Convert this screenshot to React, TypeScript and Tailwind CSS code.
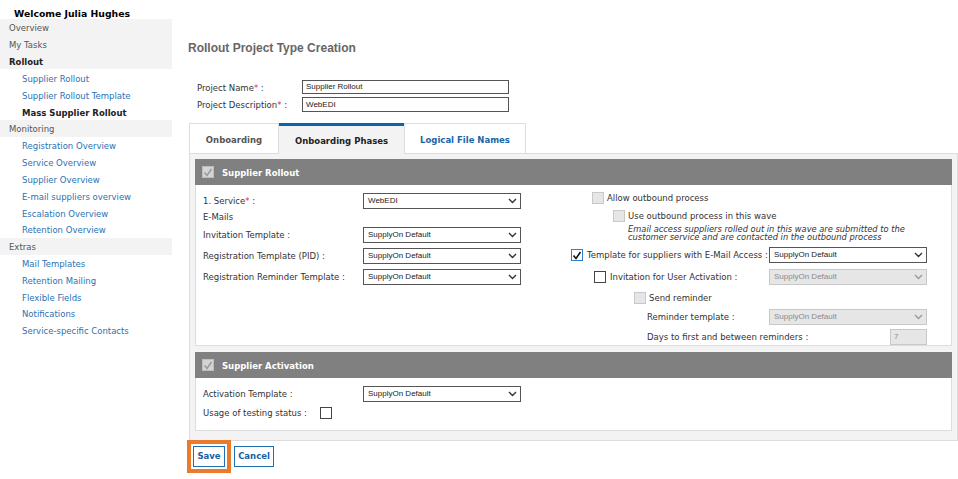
import React from "react";

const NAV: { label: string; kind: "cat" | "link" | "active" | "catActive" }[] = [
  { label: "Overview", kind: "cat" },
  { label: "My Tasks", kind: "cat" },
  { label: "Rollout", kind: "catActive" },
  { label: "Supplier Rollout", kind: "link" },
  { label: "Supplier Rollout Template", kind: "link" },
  { label: "Mass Supplier Rollout", kind: "active" },
  { label: "Monitoring", kind: "cat" },
  { label: "Registration Overview", kind: "link" },
  { label: "Service Overview", kind: "link" },
  { label: "Supplier Overview", kind: "link" },
  { label: "E-mail suppliers overview", kind: "link" },
  { label: "Escalation Overview", kind: "link" },
  { label: "Retention Overview", kind: "link" },
  { label: "Extras", kind: "cat" },
  { label: "Mail Templates", kind: "link" },
  { label: "Retention Mailing", kind: "link" },
  { label: "Flexible Fields", kind: "link" },
  { label: "Notifications", kind: "link" },
  { label: "Service-specific Contacts", kind: "link" },
];

const VERDANA = "font-['DejaVu_Sans',Verdana,sans-serif]";
const ARIAL = "font-['Liberation_Sans',Arial,sans-serif]";

function Chevron({ disabled }: { disabled?: boolean }) {
  return (
    <svg width="9" height="6" viewBox="0 0 9 6" className="shrink-0">
      <polyline
        points="1,1 4.5,4.5 8,1"
        fill="none"
        stroke={disabled ? "#9a9a9a" : "#333"}
        strokeWidth="1.4"
      />
    </svg>
  );
}

function Select({ value, disabled }: { value: string; disabled?: boolean }) {
  return (
    <div
      className={`flex h-[16px] w-[158px] shrink-0 items-center justify-between pl-[4px] pr-[3px] text-[8px] ${ARIAL} ${
        disabled
          ? "border border-[#c8c8c8] bg-[#e6e6e6] text-[#8a8a8a]"
          : "border border-[#555] bg-white text-[#222]"
      }`}
    >
      <span>{value}</span>
      <Chevron disabled={disabled} />
    </div>
  );
}

function Check({ state }: { state: "off" | "disabled" | "on" }) {
  if (state === "on") {
    return (
      <div className="flex h-[12px] w-[12px] shrink-0 items-center justify-center border border-[#2f7fd0] bg-white">
        <svg width="10" height="9" viewBox="0 0 10 9">
          <polyline points="1.5,4.5 4,7.5 8.5,1" fill="none" stroke="#111" strokeWidth="1.6" />
        </svg>
      </div>
    );
  }
  if (state === "disabled") {
    return <div className="h-[12px] w-[12px] shrink-0 border border-[#c8c8c8] bg-[#e6e6e6]" />;
  }
  return <div className="h-[12px] w-[12px] shrink-0 border border-[#444] bg-white" />;
}

function HeaderCheck() {
  return (
    <div className="flex h-[12px] w-[12px] items-center justify-center border border-[#bdbdbd] bg-[#d4d4d4]">
      <svg width="10" height="9" viewBox="0 0 10 9">
        <polyline points="1.5,4.5 4,7.5 8.5,1" fill="none" stroke="#9c9c9c" strokeWidth="1.6" />
      </svg>
    </div>
  );
}

function SectionHeader({ title }: { title: string }) {
  return (
    <div className="flex h-[26px] items-center gap-[8px] bg-[#808080] pl-[7px]">
      <HeaderCheck />
      <span className="pt-[1px] text-[8.5px] font-bold text-white">{title}</span>
    </div>
  );
}

export default function App() {
  return (
    <div className={`flex h-[479px] w-[958px] bg-white text-[#333] ${VERDANA}`}>
      <aside className="w-[172px] shrink-0">
        <div className="flex h-[19px] items-end pl-[14px] text-[9.3px] font-bold leading-[10px] text-black">
          Welcome Julia Hughes
        </div>
        {NAV.map((n) => {
          const gray = n.kind === "cat" || n.kind === "catActive";
          return (
            <div
              key={n.label}
              className={`flex h-[16.83px] items-center pt-[2px] text-[8.5px] leading-[12px] ${gray ? "bg-[#f3f3f3] pl-[9px]" : "pl-[22px]"} ${
                n.kind === "cat"
                  ? "text-[#555]"
                  : n.kind === "catActive"
                  ? "font-bold text-[#222]"
                  : n.kind === "active"
                  ? "font-bold text-[#222]"
                  : "text-[#2a72b5]"
              }`}
            >
              {n.label}
            </div>
          );
        })}
      </aside>

      <main className="flex-1 pl-[16px]">
        <h1 className={`mt-[41px] text-[12px] font-bold leading-[14px] text-[#666] ${ARIAL}`}>
          Rollout Project Type Creation
        </h1>

        <div className="mt-[25px] flex flex-col gap-[3px] pl-[9px] text-[8.5px] leading-[12px]">
          <div className="flex items-center">
            <span className="w-[105px] pt-[1px]">
              Project Name<span className="text-[#e0245e]">*</span> :
            </span>
            <div className={`flex h-[14px] w-[207px] items-center border border-[#555] pl-[3px] text-[8px] text-[#222] ${ARIAL}`}>
              Supplier Rollout
            </div>
          </div>
          <div className="flex items-center">
            <span className="w-[105px] pt-[1px]">
              Project Description<span className="text-[#e0245e]">*</span> :
            </span>
            <div className={`flex h-[15px] w-[207px] items-center border border-[#555] pl-[3px] text-[8px] text-[#222] ${ARIAL}`}>
              WebEDI
            </div>
          </div>
        </div>

        <div className="ml-px mt-[11px] w-[769px]">
          <div className="relative z-10 flex h-[30px] text-[8.5px] font-bold">
            <div className="flex w-[90px] items-center justify-center border border-b-0 border-[#ddd] bg-white pt-[3px] text-[#555]">
              Onboarding
            </div>
            <div className="flex h-[31px] w-[125px] items-center justify-center border-t-[3px] border-[#0a64ad] bg-[#f3f3f3] pt-[2px] text-[#222]">
              Onboarding Phases
            </div>
            <div className="flex w-[122px] items-center justify-center border border-b-0 border-[#ddd] bg-white pt-[3px] text-[#1a65a8]">
              Logical File Names
            </div>
          </div>

          <div className="flex flex-col gap-[6px] border border-[#ddd] bg-[#f3f3f3] px-[5px] pb-[9px] pt-[5px] text-[8.5px] leading-[12px]">
            <section>
              <SectionHeader title="Supplier Rollout" />
              <div className="flex h-[161px] border border-t-0 border-[#ddd] bg-white">
                <div className="flex w-[365px] flex-col pl-[7px] pt-[8px]">
                  <div className="flex items-center">
                    <span className="w-[160px]">
                      1. Service<span className="text-[#e0245e]">*</span> :
                    </span>
                    <Select value="WebEDI" />
                  </div>
                  <div className="flex h-[14px] items-center pt-[2px]">E-Mails</div>
                  <div className="mt-[4px] flex items-center">
                    <span className="w-[160px]">Invitation Template :</span>
                    <Select value="SupplyOn Default" />
                  </div>
                  <div className="mt-[5px] flex items-center">
                    <span className="w-[160px]">Registration Template (PID) :</span>
                    <Select value="SupplyOn Default" />
                  </div>
                  <div className="mt-[5px] flex items-center">
                    <span className="w-[160px]">Registration Reminder Template :</span>
                    <Select value="SupplyOn Default" />
                  </div>
                </div>

                <div className="flex flex-1 flex-col pt-[7px]">
                  <div className="flex h-[12px] items-center gap-[3px] pl-[31px]">
                    <Check state="disabled" />
                    <span>Allow outbound process</span>
                  </div>
                  <div className="mt-[6px] flex h-[12px] items-center gap-[3px] pl-[52px]">
                    <Check state="disabled" />
                    <span>Use outbound process in this wave</span>
                  </div>
                  <div className="mt-[3px] h-[16px] pl-[67px] text-[8.3px] italic leading-[8px]">
                    Email access suppliers rolled out in this wave are submitted to the
                    <br />
                    customer service and are contacted in the outbound process
                  </div>
                  <div className="mt-[6px] flex items-center">
                    <div className="flex w-[208px] items-center gap-[4px] whitespace-nowrap pl-[10px]">
                      <Check state="on" />
                      <span>Template for suppliers with E-Mail Access :</span>
                    </div>
                    <Select value="SupplyOn Default" />
                  </div>
                  <div className="mt-[6px] flex items-center">
                    <div className="flex w-[208px] items-center gap-[4px] pl-[33px]">
                      <Check state="off" />
                      <span>Invitation for User Activation :</span>
                    </div>
                    <Select value="SupplyOn Default" disabled />
                  </div>
                  <div className="mt-[7px] flex h-[12px] items-center gap-[3px] pl-[73px]">
                    <Check state="disabled" />
                    <span>Send reminder</span>
                  </div>
                  <div className="mt-[5px] flex items-center">
                    <span className="w-[208px] pl-[86px]">Reminder template :</span>
                    <Select value="SupplyOn Default" disabled />
                  </div>
                  <div className="mt-[4px] flex items-center">
                    <span className="w-[329px] pl-[86px]">Days to first and between reminders :</span>
                    <div className={`flex h-[16px] w-[37px] items-center border border-[#c8c8c8] bg-[#e6e6e6] pl-[3px] text-[8px] text-[#8a8a8a] ${ARIAL}`}>
                      7
                    </div>
                  </div>
                </div>
              </div>
            </section>

            <section>
              <SectionHeader title="Supplier Activation" />
              <div className="flex h-[53px] flex-col border border-t-0 border-[#ddd] bg-white pl-[7px] pt-[8px]">
                <div className="flex items-center">
                  <span className="w-[160px]">Activation Template :</span>
                  <Select value="SupplyOn Default" />
                </div>
                <div className="mt-[5px] flex items-center">
                  <span className="w-[117px]">Usage of testing status :</span>
                  <Check state="off" />
                </div>
              </div>
            </section>
          </div>
        </div>

        <div className="ml-[5px] mt-[5px] flex gap-[9px] text-[8.5px] font-bold text-[#1563a6]">
          <button className="h-[21px] w-[32px] border border-[#1f6fb2] bg-white outline-[4px] outline-offset-[2px] outline-[#ea7b2c] outline-solid">
            Save
          </button>
          <button className="h-[21px] w-[40px] border border-[#1f6fb2] bg-white">Cancel</button>
        </div>
      </main>
    </div>
  );
}
